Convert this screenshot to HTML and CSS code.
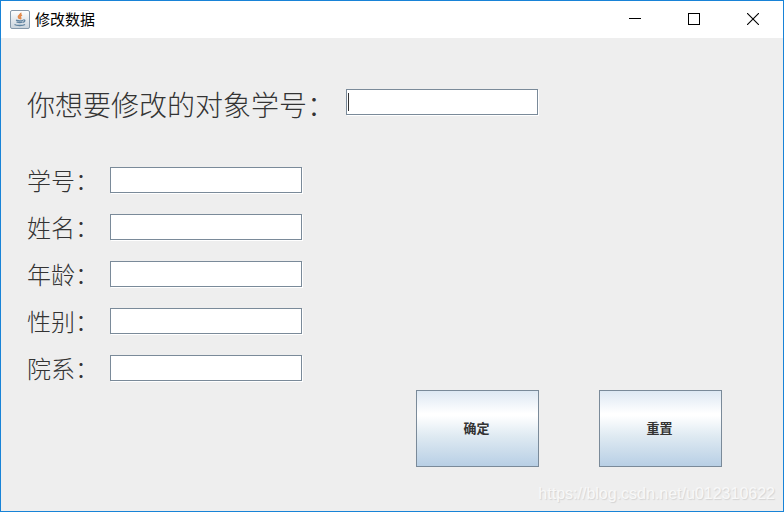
FILE: index.html
```html
<!DOCTYPE html>
<html lang="zh-CN">
<head>
  <meta charset="UTF-8">
  <title>修改数据</title>
  <link rel="stylesheet" href="styles.css">
</head>
<body>
  <div class="window">
    <header class="titlebar">
      <svg class="app-icon" width="20" height="19" viewBox="0 0 20 19">
        <defs>
          <linearGradient id="tile" x1="0" y1="0" x2="0" y2="1">
            <stop offset="0" stop-color="#ffffff"/>
            <stop offset="1" stop-color="#c9d3dc"/>
          </linearGradient>
        </defs>
        <rect x="0.5" y="0.5" width="19" height="18" rx="1.5" fill="url(#tile)" stroke="#8598aa"/>
        <path d="M10.800 2.800c.6 2-3 2.500-2.400 4.300.2.700.9 1.200 1.200 1.900M12 5c-2 .8-2.300 1.700-1.500 2.600.5.600.2 1.100-.3 1.500" fill="none" stroke="#e28a4c" stroke-width="1.600"/>
        <path d="M6 10.200c2 .8 5.500.8 7 0M6.500 12c2 .7 4.500.7 6 0M13.300 10c2.200-.4 2 2-.5 2.300M4.500 14.500c2 1.300 8.500 1.300 10.500 0" fill="none" stroke="#5f829f" stroke-width="1.300"/>
      </svg>
      <h1 class="title">修改数据</h1>
      <div class="controls">
        <button type="button" class="control" aria-label="最小化">
          <svg width="12" height="12" viewBox="0 0 12 12" shape-rendering="crispEdges"><path d="M0 5.500h12" stroke="#000"/></svg>
        </button>
        <button type="button" class="control" aria-label="最大化">
          <svg width="12" height="12" viewBox="0 0 12 12" shape-rendering="crispEdges"><rect x="0.5" y="0.5" width="11" height="11" fill="none" stroke="#000"/></svg>
        </button>
        <button type="button" class="control" aria-label="关闭">
          <svg width="12" height="12" viewBox="0 0 12 12"><path d="M0 0l12 12M12 0L0 12" stroke="#000" stroke-width="1.100"/></svg>
        </button>
      </div>
    </header>

    <form class="content">
      <div class="row query">
        <label for="target">你想要修改的对象学号：</label>
        <span class="field active"><input type="text" id="target"></span>
      </div>

      <div class="fields">
        <div class="row">
          <label for="sno">学号：</label>
          <span class="field"><input type="text" id="sno"></span>
        </div>
        <div class="row">
          <label for="name">姓名：</label>
          <span class="field"><input type="text" id="name"></span>
        </div>
        <div class="row">
          <label for="age">年龄：</label>
          <span class="field"><input type="text" id="age"></span>
        </div>
        <div class="row">
          <label for="sex">性别：</label>
          <span class="field"><input type="text" id="sex"></span>
        </div>
        <div class="row">
          <label for="dept">院系：</label>
          <span class="field"><input type="text" id="dept"></span>
        </div>
      </div>

      <div class="actions">
        <button type="submit" class="btn">确定</button>
        <button type="reset" class="btn">重置</button>
      </div>
    </form>

    <span class="watermark">https://blog.csdn.net/u012310622</span>
  </div>
</body>
</html>
```
FILE: styles.css
```css
* {
  box-sizing: border-box;
}

body {
  margin: 0;
  font-family: "Liberation Sans", "Noto Sans CJK SC", sans-serif;
  color: #333;
}

.window {
  position: relative;
  min-height: 100vh;
  border: 1px solid #1883d7;
  background: #eee;
}

/* title bar */
.titlebar {
  display: flex;
  align-items: center;
  height: 37px;
  padding: 0 1px 0 9px;
  background: #fff;
}

.title {
  flex: 1;
  margin: 0 0 0 5px;
  font-size: 15px;
  font-weight: 400;
  line-height: 20px;
  color: #000;
}

.controls {
  display: flex;
}

.control {
  display: flex;
  align-items: center;
  justify-content: center;
  width: 59px;
  height: 36px;
  padding: 0 0 2px;
  border: 0;
  background: none;
}

/* form */
.content {
  padding: 51px 61px 0 26px;
}

.row {
  display: flex;
  align-items: center;
  gap: 11px;
  height: 26px;
  font-size: 24px;
  font-weight: 300;
  line-height: 28px;
}

.row label {
  padding-top: 4px;
  white-space: nowrap;
}

.query {
  font-size: 28px;
}

.query label {
  padding-top: 10px;
}

.fields {
  display: grid;
  gap: 21px;
  margin-top: 52px;
}

.field {
  position: relative;
  display: flex;
}

.field input {
  width: 192px;
  height: 26px;
  padding: 0 2px;
  border: 1px solid #7a8a99;
  background: #fff;
  box-shadow: 1px 1px 0 #fff;
  font-size: 16px;
  outline: none;
}

/* text caret of the field being edited */
.active::after {
  content: "";
  position: absolute;
  top: 4px;
  left: 2px;
  width: 1px;
  height: 18px;
  background: #333;
}

.actions {
  display: flex;
  justify-content: flex-end;
  gap: 60px;
  margin-top: 9px;
}

.btn {
  width: 123px;
  height: 77px;
  padding: 0 2px 2px 0;
  border: 1px solid #7a8a99;
  background: linear-gradient(#dde8f3 0%, #fff 30%, #fff 33%, #dfeaf2 60%, #b8cfe5 100%);
  font-family: "Noto Sans CJK SC", sans-serif;
  font-size: 13px;
  font-weight: 700;
  color: #333;
}

.watermark {
  position: absolute;
  right: 8px;
  bottom: 7px;
  font-size: 16px;
  line-height: 20px;
  color: #f8f8f8;
  text-shadow: 1px 1px 1px #d4d4d4;
}
```
